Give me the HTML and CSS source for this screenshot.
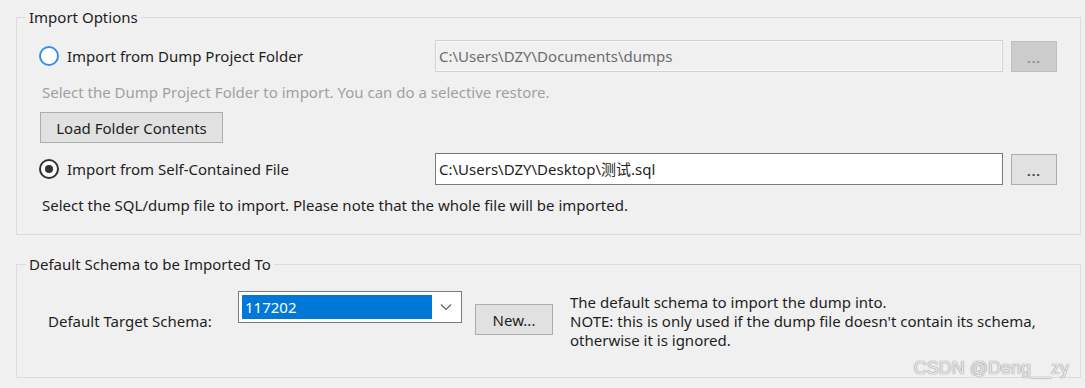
FILE: index.html
```html
<!DOCTYPE html>
<html lang="en">
<head>
  <meta charset="UTF-8">
  <title>Import Options</title>
  <link rel="stylesheet" href="styles.css">
</head>
<body>
  <div class="panel">
    <fieldset class="group group-import">
      <legend>Import Options</legend>

      <div class="opt-row">
        <label class="radio-label">
          <span class="radio radio-focus"></span>
          Import from Dump Project Folder
        </label>
        <div class="path-field disabled">C:\Users\DZY\Documents\dumps</div>
        <button class="browse-btn disabled" type="button">...</button>
      </div>
      <p class="hint muted">Select the Dump Project Folder to import. You can do a selective restore.</p>
      <button class="win-btn load-btn" type="button">Load Folder Contents</button>

      <div class="opt-row opt-row-file">
        <label class="radio-label">
          <span class="radio checked"></span>
          Import from Self-Contained File
        </label>
        <div class="path-field">C:\Users\DZY\Desktop\测试.sql</div>
        <button class="browse-btn" type="button">...</button>
      </div>
      <p class="hint">Select the SQL/dump file to import. Please note that the whole file will be imported.</p>
    </fieldset>

    <fieldset class="group group-schema">
      <legend>Default Schema to be Imported To</legend>
      <div class="schema-row">
        <span class="schema-label">Default Target Schema:</span>
        <div class="combo">
          <span class="combo-value">117202</span>
          <svg class="combo-arrow" width="12" height="8" viewBox="0 0 12 8">
            <path d="M1 1.5 L6 6.5 L11 1.5" fill="none" stroke="#606060" stroke-width="1.2"/>
          </svg>
        </div>
        <button class="win-btn new-btn" type="button">New...</button>
        <p class="schema-note">
          The default schema to import the dump into.<br>
          NOTE: this is only used if the dump file doesn't contain its schema,<br>
          otherwise it is ignored.
        </p>
      </div>
    </fieldset>

    <div class="watermark">CSDN @Deng__zy</div>
  </div>
</body>
</html>
```

FILE: styles.css
```css
body {
  margin: 0;
  background: #f0f0f0;
  font-family: "Noto Sans", "Noto Sans CJK SC", sans-serif;
  font-size: 15px;
  color: #1e1e1e;
}

.panel {
  position: relative;
  height: 388px;
  padding: 7px 4px 0 16px;
  box-sizing: border-box;
}

.group {
  margin: 0;
  border: 1px solid #dcdcdc;
  padding: 0 22px 0 22px;
}

.group legend {
  padding: 0 3px;
  margin-left: -13px;
  line-height: 20px;
  color: #1e1e1e;
}

.group-import {
  height: 228px;
  box-sizing: border-box;
  padding-top: 13px;
}

.group-schema {
  margin-top: 19px;
  height: 124px;
  box-sizing: border-box;
}

/* option rows */
.opt-row {
  display: flex;
  align-items: center;
  height: 32px;
}

.opt-row-file {
  margin-top: 10px;
}

.radio-label {
  width: 396px;
  display: flex;
  align-items: center;
  gap: 8px;
}

.radio {
  width: 16px;
  height: 16px;
  border: 2px solid #333;
  border-radius: 50%;
  background: #fff;
  box-sizing: content-box;
  position: relative;
}

.radio-focus {
  border-color: #3a8ee6;
}

.radio.checked::after {
  content: "";
  position: absolute;
  left: 4px;
  top: 4px;
  width: 8px;
  height: 8px;
  border-radius: 50%;
  background: #333;
}

.path-field {
  width: 568px;
  height: 32px;
  box-sizing: border-box;
  border: 1px solid #7a7a7a;
  background: #fff;
  padding: 0 3px;
  line-height: 30px;
}

.path-field.disabled {
  border-color: #d0d0d0;
  background: #f0f0f0;
  box-shadow: inset 0 0 0 1px #fafafa;
  color: #6d6d6d;
}

.browse-btn {
  margin-left: 8px;
  width: 46px;
  height: 31px;
  border: 1px solid #adadad;
  background: #e1e1e1;
  font-family: inherit;
  font-size: 13px;
  font-weight: bold;
  letter-spacing: 1px;
  color: #3c3c50;
  padding: 4px 0 0;
}

.browse-btn.disabled {
  background: #cccccc;
  border-color: #bfbfbf;
  color: #8a8a9a;
}

.hint {
  margin: 10px 0 0 3px;
  line-height: 20px;
}

.muted {
  color: #a0a0a0;
}

.win-btn {
  border: 1px solid #adadad;
  background: #e1e1e1;
  font-family: inherit;
  font-size: 15px;
  color: #1e1e1e;
  padding: 0;
}

.load-btn {
  margin: 10px 0 0 1px;
  width: 183px;
  height: 31px;
}

/* schema */
.schema-row {
  display: flex;
  align-items: flex-start;
  padding: 17px 0 0 9px;
}

.schema-label {
  width: 190px;
  margin-top: 20px;
}

.combo {
  width: 224px;
  height: 32px;
  box-sizing: border-box;
  border: 1px solid #7a7a7a;
  background: #fff;
  display: flex;
  align-items: center;
  padding: 3px;
}

.combo-value {
  width: 190px;
  height: 24px;
  background: #0078d7;
  color: #fff;
  line-height: 24px;
  padding-left: 3px;
  box-sizing: border-box;
}

.combo-arrow {
  margin-left: 8px;
}

.new-btn {
  margin: 13px 0 0 13px;
  width: 78px;
  height: 31px;
}

.schema-note {
  margin: 2px 0 0 17px;
  line-height: 19px;
}

.watermark {
  position: absolute;
  right: 16px;
  bottom: 9px;
  font-family: "Liberation Sans", sans-serif;
  font-size: 18px;
  color: #e8e8e8;
  text-shadow: 0 0 1px #8a8a8a, 0 0 1px #8a8a8a;
}
```
